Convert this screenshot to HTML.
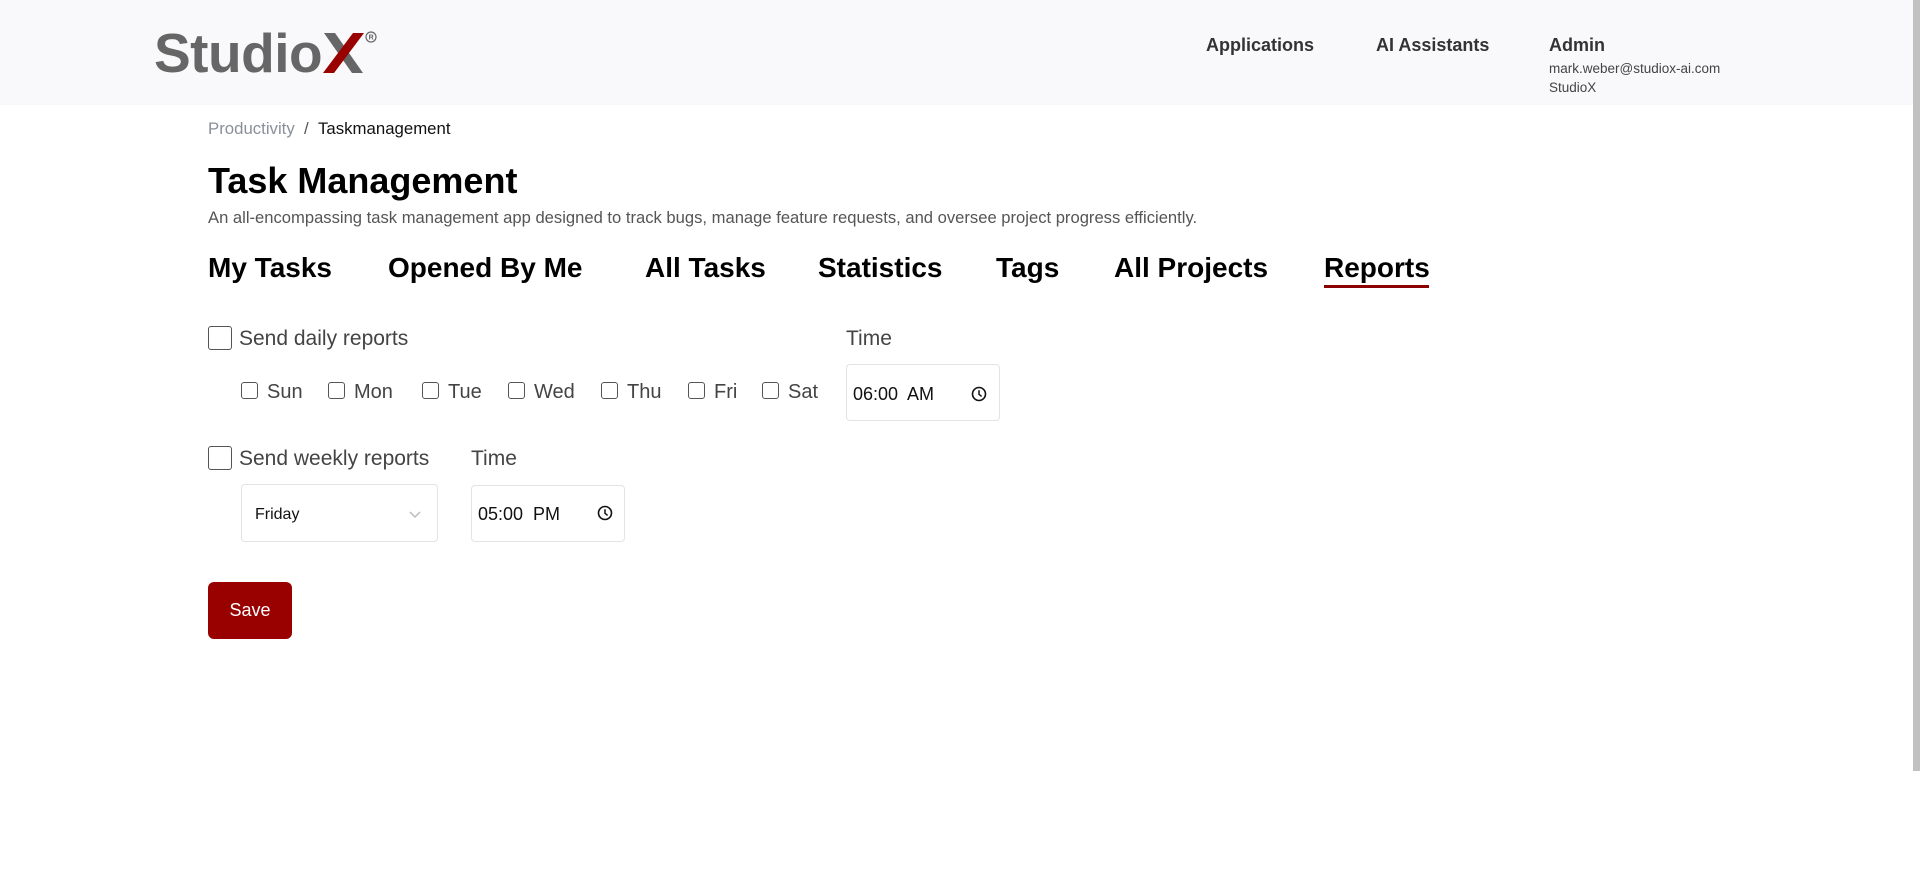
<!DOCTYPE html>
<html><head><meta charset="utf-8"><style>
*{box-sizing:border-box;margin:0;padding:0}
body{width:1920px;height:878px;overflow:hidden;background:#fff;font-family:"Liberation Sans",sans-serif;color:#000;position:relative}
.abs{position:absolute;white-space:nowrap}
.hdr{position:absolute;left:0;top:0;width:1920px;height:105px;background:#f9f9fb}
.nav{font-weight:bold;font-size:18px;color:#333;top:35px}
.tab{font-weight:bold;font-size:28px;top:252px;letter-spacing:0}
.cb{position:absolute;border:1.5px solid #555;border-radius:3px;background:#fff}
.lbl{font-size:21px;color:#444}
.day{font-size:20px;color:#444;top:381px}
.inp{position:absolute;border:1px solid #e3e3e6;border-radius:4px;background:#fff}
</style></head><body>
<div class="hdr"></div>
<div class="abs" style="left:154px;top:20px;font-size:55px;font-weight:bold;color:#666;letter-spacing:-0.5px;line-height:66px">Studio</div>
<svg class="abs" style="left:320px;top:30px" width="60" height="46" viewBox="0 0 60 46">
<polygon points="4,3 15,3 43,43 32,43" fill="#666"/>
<polygon points="3,43 14,43 44,3 33,3" fill="#990000"/>
<circle cx="51" cy="7" r="5" fill="none" stroke="#666" stroke-width="1.2"/>
<text x="48.6" y="9.6" font-size="7" font-family="Liberation Sans" fill="#666" font-weight="bold">R</text>
</svg>
<div class="abs nav" style="left:1206px">Applications</div>
<div class="abs nav" style="left:1376px">AI Assistants</div>
<div class="abs nav" style="left:1549px">Admin</div>
<div class="abs" style="left:1549px;top:61px;font-size:13.5px;color:#444">mark.weber@studiox-ai.com</div>
<div class="abs" style="left:1549px;top:80px;font-size:13.5px;color:#444">StudioX</div>
<div class="abs" style="left:1913px;top:0;width:7px;height:771px;background:#c1c1c1"></div>

<div class="abs" style="left:208px;top:119px;font-size:16.8px"><span style="color:#8a8f99">Productivity</span><span style="color:#555">&nbsp; / &nbsp;</span><span style="color:#111">Taskmanagement</span></div>
<div class="abs" style="left:208px;top:160px;font-size:36px;font-weight:bold">Task Management</div>
<div class="abs" style="left:208px;top:208px;font-size:16.6px;color:#555">An all-encompassing task management app designed to track bugs, manage feature requests, and oversee project progress efficiently.</div>

<div class="abs tab" style="left:208px">My Tasks</div>
<div class="abs tab" style="left:388px">Opened By Me</div>
<div class="abs tab" style="left:645px">All Tasks</div>
<div class="abs tab" style="left:818px">Statistics</div>
<div class="abs tab" style="left:996px">Tags</div>
<div class="abs tab" style="left:1114px">All Projects</div>
<div class="abs tab" style="left:1324px">Reports</div>
<div class="abs" style="left:1324px;top:285px;width:105px;height:3px;background:#8b0000"></div>

<div class="cb" style="left:208px;top:326px;width:24px;height:24px"></div>
<div class="abs lbl" style="left:239px;top:327px">Send daily reports</div>
<div class="abs lbl" style="left:846px;top:327px">Time</div>

<div class="cb" style="left:241px;top:382px;width:17px;height:17px;border-width:1px"></div><div class="abs day" style="left:267px">Sun</div>
<div class="cb" style="left:328px;top:382px;width:17px;height:17px;border-width:1px"></div><div class="abs day" style="left:354px">Mon</div>
<div class="cb" style="left:422px;top:382px;width:17px;height:17px;border-width:1px"></div><div class="abs day" style="left:448px">Tue</div>
<div class="cb" style="left:508px;top:382px;width:17px;height:17px;border-width:1px"></div><div class="abs day" style="left:534px">Wed</div>
<div class="cb" style="left:601px;top:382px;width:17px;height:17px;border-width:1px"></div><div class="abs day" style="left:627px">Thu</div>
<div class="cb" style="left:688px;top:382px;width:17px;height:17px;border-width:1px"></div><div class="abs day" style="left:714px">Fri</div>
<div class="cb" style="left:762px;top:382px;width:17px;height:17px;border-width:1px"></div><div class="abs day" style="left:788px">Sat</div>

<div class="inp" style="left:846px;top:364px;width:154px;height:57px"></div>
<div class="abs" style="left:853px;top:384px;font-size:18px;color:#111">06:00&nbsp; AM</div>
<svg class="abs" style="left:971px;top:386px" width="16" height="16" viewBox="0 0 16 16"><circle cx="8" cy="8" r="6.5" fill="none" stroke="#111" stroke-width="1.6"/><path d="M8 4.2V8.3L10.6 10.4" fill="none" stroke="#111" stroke-width="1.5"/></svg>

<div class="cb" style="left:208px;top:446px;width:24px;height:24px"></div>
<div class="abs lbl" style="left:239px;top:447px">Send weekly reports</div>
<div class="abs lbl" style="left:471px;top:447px">Time</div>

<div class="inp" style="left:241px;top:484px;width:197px;height:58px"></div>
<div class="abs" style="left:255px;top:506px;font-size:16px;color:#111">Friday</div>
<svg class="abs" style="left:408px;top:510px" width="14" height="10" viewBox="0 0 14 10"><path d="M2 2L7 7L12 2" fill="none" stroke="#bbb" stroke-width="1.5"/></svg>

<div class="inp" style="left:471px;top:485px;width:154px;height:57px"></div>
<div class="abs" style="left:478px;top:504px;font-size:18px;color:#111">05:00&nbsp; PM</div>
<svg class="abs" style="left:597px;top:505px" width="16" height="16" viewBox="0 0 16 16"><circle cx="8" cy="8" r="6.5" fill="none" stroke="#111" stroke-width="1.6"/><path d="M8 4.2V8.3L10.6 10.4" fill="none" stroke="#111" stroke-width="1.5"/></svg>

<div class="abs" style="left:208px;top:582px;width:84px;height:57px;background:#990000;border-radius:6px;color:#fff;font-size:18px;line-height:57px;text-align:center">Save</div>
</body></html>
